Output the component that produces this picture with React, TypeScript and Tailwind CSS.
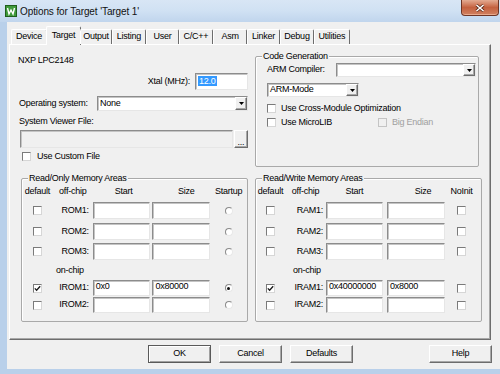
import React from "react";

const sunken =
  "border border-t-[#8c8c8c] border-l-[#8c8c8c] border-r-[#e6e6e6] border-b-[#e6e6e6] shadow-[inset_1px_1px_0_#c4c4c4]";
const raised =
  "border border-t-white border-l-white border-r-[#6d6d6d] border-b-[#6d6d6d] shadow-[inset_-1px_-1px_0_#a8a8a8]";

function Check({ checked = false, disabled = false }: { checked?: boolean; disabled?: boolean }) {
  return (
    <span
      className={`flex h-[9px] w-[9px] shrink-0 items-center justify-center border ${
        disabled
          ? "border-[#c4c4c4] bg-[#f0f0f0]"
          : "border-t-[#7a7a7a] border-l-[#7a7a7a] border-r-[#d6d6d6] border-b-[#d6d6d6] bg-white"
      }`}
    >
      {checked && (
        <svg width="7" height="7" viewBox="0 0 7 7">
          <path d="M0.8 3.4 L2.6 5.3 L6.2 1.2" fill="none" stroke="#1a1a1a" strokeWidth="1.3" />
        </svg>
      )}
    </span>
  );
}

function Radio({ checked = false }: { checked?: boolean }) {
  return (
    <span className="flex h-[8px] w-[8px] items-center justify-center rounded-full border border-t-[#8a8a8a] border-l-[#8a8a8a] border-r-[#e8e8e8] border-b-[#e8e8e8] bg-white">
      {checked && <span className="h-[3px] w-[3px] rounded-full bg-[#111]" />}
    </span>
  );
}

function DropArrow() {
  return (
    <span className={`flex h-full w-[12px] shrink-0 items-center justify-center bg-[#f0f0f0] ${raised}`}>
      <svg width="5" height="3" viewBox="0 0 5 3">
        <path d="M0 0 H5 L2.5 3 Z" fill="#000" />
      </svg>
    </span>
  );
}

function Legend({ children }: { children: React.ReactNode }) {
  return (
    <span className="absolute left-[6px] top-[-6px] bg-[#f0f0f0] px-[1px] leading-[10px]">{children}</span>
  );
}

type Row = { cb: boolean; label: string; start: string; size: string; sel: boolean; h: string; mt: string };

function MemoryGroup({ title, rw }: { title: string; rw: boolean }) {
  const p = rw ? "RAM" : "ROM";
  const rows: Row[] = [
    { cb: false, label: `${p}1:`, start: "", size: "", sel: false, h: "h-[17px]", mt: "mt-[6px]" },
    { cb: false, label: `${p}2:`, start: "", size: "", sel: false, h: "h-[17px]", mt: "mt-[4px]" },
    { cb: false, label: `${p}3:`, start: "", size: "", sel: false, h: "h-[17px]", mt: "mt-[3px]" },
    {
      cb: true,
      label: `I${p}1:`,
      start: rw ? "0x40000000" : "0x0",
      size: rw ? "0x8000" : "0x80000",
      sel: true,
      h: "h-[16px]",
      mt: "mt-[5px]",
    },
    { cb: false, label: `I${p}2:`, start: "", size: "", sel: false, h: "h-[16px]", mt: "mt-[1px]" },
  ];
  const c1 = rw ? "w-[29px]" : "w-[31px]";
  const c2 = rw ? "w-[41px] pr-[3px]" : "w-[40px] pr-[4px]";
  const c3 = rw ? "w-[57px]" : "w-[58px]";
  const gap = rw ? "ml-[4px]" : "ml-[2px]";
  const c5 = rw ? "w-[33px]" : "w-[37px]";
  return (
    <div className="relative h-[144px] w-[227px] rounded-[2px] border border-[#a9a9a9] shadow-[inset_1px_1px_0_#fff]">
      <Legend>{title}</Legend>
      <div className="mt-[8px] flex h-[9px] items-center leading-[9px]">
        <span className={`${c1} text-center`}>default</span>
        <span className={`${rw ? "w-[41px]" : "w-[40px]"} text-center`}>off-chip</span>
        <span className={`${c3} text-center ${rw ? "" : "pl-[4px]"}`}>Start</span>
        <span className={`w-[58px] ${gap} text-center ${rw ? "pl-[14px]" : "pl-[10px]"}`}>Size</span>
        <span className={`${c5} text-center`}>{rw ? "NoInit" : "Startup"}</span>
      </div>
      {rows.map((r, i) => (
        <React.Fragment key={i}>
          {i === 3 && (
            <div className="mt-[6px] flex h-[9px] leading-[9px]">
              <span className={c1} />
              <span className={rw ? "pl-[8px]" : "pl-[3px]"}>on-chip</span>
            </div>
          )}
          <div className={`${r.mt} flex ${r.h} items-center`}>
            <span className={`${c1} flex justify-center`}>
              <Check checked={r.cb} />
            </span>
            <span className={`${c2} text-right`}>{r.label}</span>
            <span className={`${c3} h-full bg-white pl-[2px] leading-[10px] ${sunken}`}>{r.start}</span>
            <span className={`w-[58px] ${gap} h-full bg-white pl-[2px] leading-[10px] ${sunken}`}>{r.size}</span>
            <span className={`${c5} flex justify-center`}>
              {rw ? <Check /> : <Radio checked={r.sel} />}
            </span>
          </div>
        </React.Fragment>
      ))}
    </div>
  );
}

const tabs = [
  { name: "Device", w: "w-[36px]" },
  { name: "Target", w: "w-[35px]" },
  { name: "Output", w: "w-[32px]" },
  { name: "Listing", w: "w-[34px]" },
  { name: "User", w: "w-[33px]" },
  { name: "C/C++", w: "w-[34px]" },
  { name: "Asm", w: "w-[34px]" },
  { name: "Linker", w: "w-[33px]" },
  { name: "Debug", w: "w-[34px]" },
  { name: "Utilities", w: "w-[36px]" },
];

function Button({ label, primary = false }: { label: string; primary?: boolean }) {
  return (
    <div
      className={`flex h-[18px] w-[63px] items-center justify-center bg-[#f0f0f0] ${
        primary
          ? "border border-[#5a5a5a] shadow-[inset_1px_1px_0_#fff,inset_-1px_-1px_0_#a0a0a0]"
          : raised
      }`}
    >
      {label}
    </div>
  );
}

export default function App() {
  return (
    <div className="flex h-[374px] w-[500px] flex-col overflow-hidden bg-[#b9d0ea] font-['Liberation_Sans',Arial,sans-serif] text-[9px] tracking-[-0.25px] text-black">
      {/* Title bar */}
      <div className="relative flex h-[22px] shrink-0 items-center bg-gradient-to-b from-[#d8e6f5] via-[#d0e1f3] to-[#c0d5ed]">
        <svg className="ml-[5px]" width="12" height="12" viewBox="0 0 12 12">
          <rect x="0.5" y="0.5" width="11" height="11" fill="#3f9a3a" stroke="#1f5e1c" />
          <path d="M2.5 3 L4 9 L6 5 L8 9 L9.5 3" fill="none" stroke="#fff" strokeWidth="1.4" />
        </svg>
        <span className="ml-[3px] text-[10px] tracking-[-0.1px] text-[#111]">Options for Target 'Target 1'</span>
        {/* Close button */}
        <div className="absolute right-[1px] top-0 flex h-[16px] w-[38px] items-center justify-center rounded-b-[4px] border border-t-0 border-[#6e3525] bg-gradient-to-b from-[#e3ab92] via-[#c4613f] to-[#d0805f] shadow-[inset_0_-1px_0_#e8a98c]">
          <svg width="10" height="8" viewBox="0 0 10 8">
            <path d="M1.5 1 L8.5 7 M8.5 1 L1.5 7" stroke="#5a2a1a" strokeWidth="3" />
            <path d="M1.5 1 L8.5 7 M8.5 1 L1.5 7" stroke="#fff" strokeWidth="1.6" />
          </svg>
        </div>
      </div>

      <div className="flex h-[347px] shrink-0">
        <div className="w-[7px] shrink-0" />
        {/* Client area */}
        <div className="flex flex-1 flex-col bg-[#f0f0f0]">
          {/* Tabs */}
          <div className="relative z-10 mt-[5px] flex h-[17px] items-end pl-[4px]">
            {tabs.map((t) =>
              t.name === "Target" ? (
                <div
                  key={t.name}
                  className={`${t.w} -mx-[1px] -mb-[1px] flex h-[19px] items-start justify-center rounded-t-[2px] border border-b-0 border-t-white border-l-white border-r-[#6d6d6d] bg-[#f0f0f0] pt-[2px]`}
                >
                  {t.name}
                </div>
              ) : (
                <div
                  key={t.name}
                  className={`${t.w} flex h-[15px] items-center justify-center rounded-t-[2px] border border-b-0 border-t-white border-l-white border-r-[#6d6d6d]`}
                >
                  {t.name}
                </div>
              )
            )}
          </div>

          {/* Tab panel */}
          <div className="ml-[2px] h-[296px] w-[482px] border border-t-white border-l-white border-r-[#6d6d6d] border-b-[#6d6d6d] shadow-[inset_-1px_-1px_0_#a8a8a8]">
            <div className="flex h-[133px]">
              {/* Left top column */}
              <div className="ml-[8px] flex w-[230px] flex-col">
                <div className="mt-[10px] h-[10px] leading-[10px]">NXP LPC2148</div>
                <div className="mt-[8px] flex h-[17px] items-center justify-end gap-[5px]">
                  <span>Xtal (MHz):</span>
                  <span className={`flex h-full w-[53px] items-start bg-white pl-[2px] pt-[2px] ${sunken}`}>
                    <span className="bg-[#3399ff] px-[1px] leading-[10px] text-white">12.0</span>
                  </span>
                </div>
                <div className="ml-[1px] mt-[6px] flex h-[15px] items-center">
                  <span className="w-[78px]">Operating system:</span>
                  <span className={`flex h-full w-[151px] items-center bg-white pl-[2px] ${sunken}`}>
                    <span className="flex-1">None</span>
                    <DropArrow />
                  </span>
                </div>
                <div className="ml-[1px] mt-[6px] h-[9px] leading-[9px]">System Viewer File:</div>
                <div className="ml-[2px] mt-[4px] flex h-[18px]">
                  <span className={`h-full w-[213px] bg-[#f0f0f0] ${sunken}`} />
                  <span className={`ml-[1px] flex h-full w-[14px] items-end justify-center bg-[#f0f0f0] pb-[2px] leading-[6px] ${raised}`}>
                    ...
                  </span>
                </div>
                <div className="ml-[4px] mt-[4px] flex h-[9px] items-center gap-[6px]">
                  <Check />
                  <span>Use Custom File</span>
                </div>
              </div>

              {/* Code Generation */}
              <div className="relative ml-[7px] mt-[11px] h-[111px] w-[224px] rounded-[2px] border border-[#a9a9a9] shadow-[inset_1px_1px_0_#fff]">
                <Legend>Code Generation</Legend>
                <div className="ml-[11px] mt-[6px] flex h-[14px] items-center">
                  <span className="w-[69px]">ARM Compiler:</span>
                  <span className={`flex h-full w-[140px] items-center bg-white ${sunken}`}>
                    <span className="flex-1" />
                    <DropArrow />
                  </span>
                </div>
                <div className="ml-[11px] mt-[6px] flex h-[14px]">
                  <span className={`flex h-full w-[92px] items-center bg-white pl-[2px] ${sunken}`}>
                    <span className="flex-1">ARM-Mode</span>
                    <DropArrow />
                  </span>
                </div>
                <div className="ml-[11px] mt-[7px] flex h-[9px] items-center gap-[5px]">
                  <Check />
                  <span>Use Cross-Module Optimization</span>
                </div>
                <div className="ml-[11px] mt-[5px] flex h-[9px] items-center">
                  <span className="flex w-[111px] items-center gap-[5px]">
                    <Check />
                    <span>Use MicroLIB</span>
                  </span>
                  <span className="flex items-center gap-[5px] text-[#a0a0a0]">
                    <Check disabled />
                    <span>Big Endian</span>
                  </span>
                </div>
              </div>
            </div>

            {/* Memory areas */}
            <div className="flex">
              <div className="ml-[11px]">
                <MemoryGroup title="Read/Only Memory Areas" rw={false} />
              </div>
              <div className="ml-[7px]">
                <MemoryGroup title="Read/Write Memory Areas" rw={true} />
              </div>
            </div>
          </div>

          {/* Buttons */}
          <div className="mt-[5px] flex">
            <div className="ml-[141px]">
              <Button label="OK" primary />
            </div>
            <div className="ml-[8px]">
              <Button label="Cancel" />
            </div>
            <div className="ml-[8px]">
              <Button label="Defaults" />
            </div>
            <div className="ml-[76px]">
              <Button label="Help" />
            </div>
          </div>
        </div>
      </div>
    </div>
  );
}
